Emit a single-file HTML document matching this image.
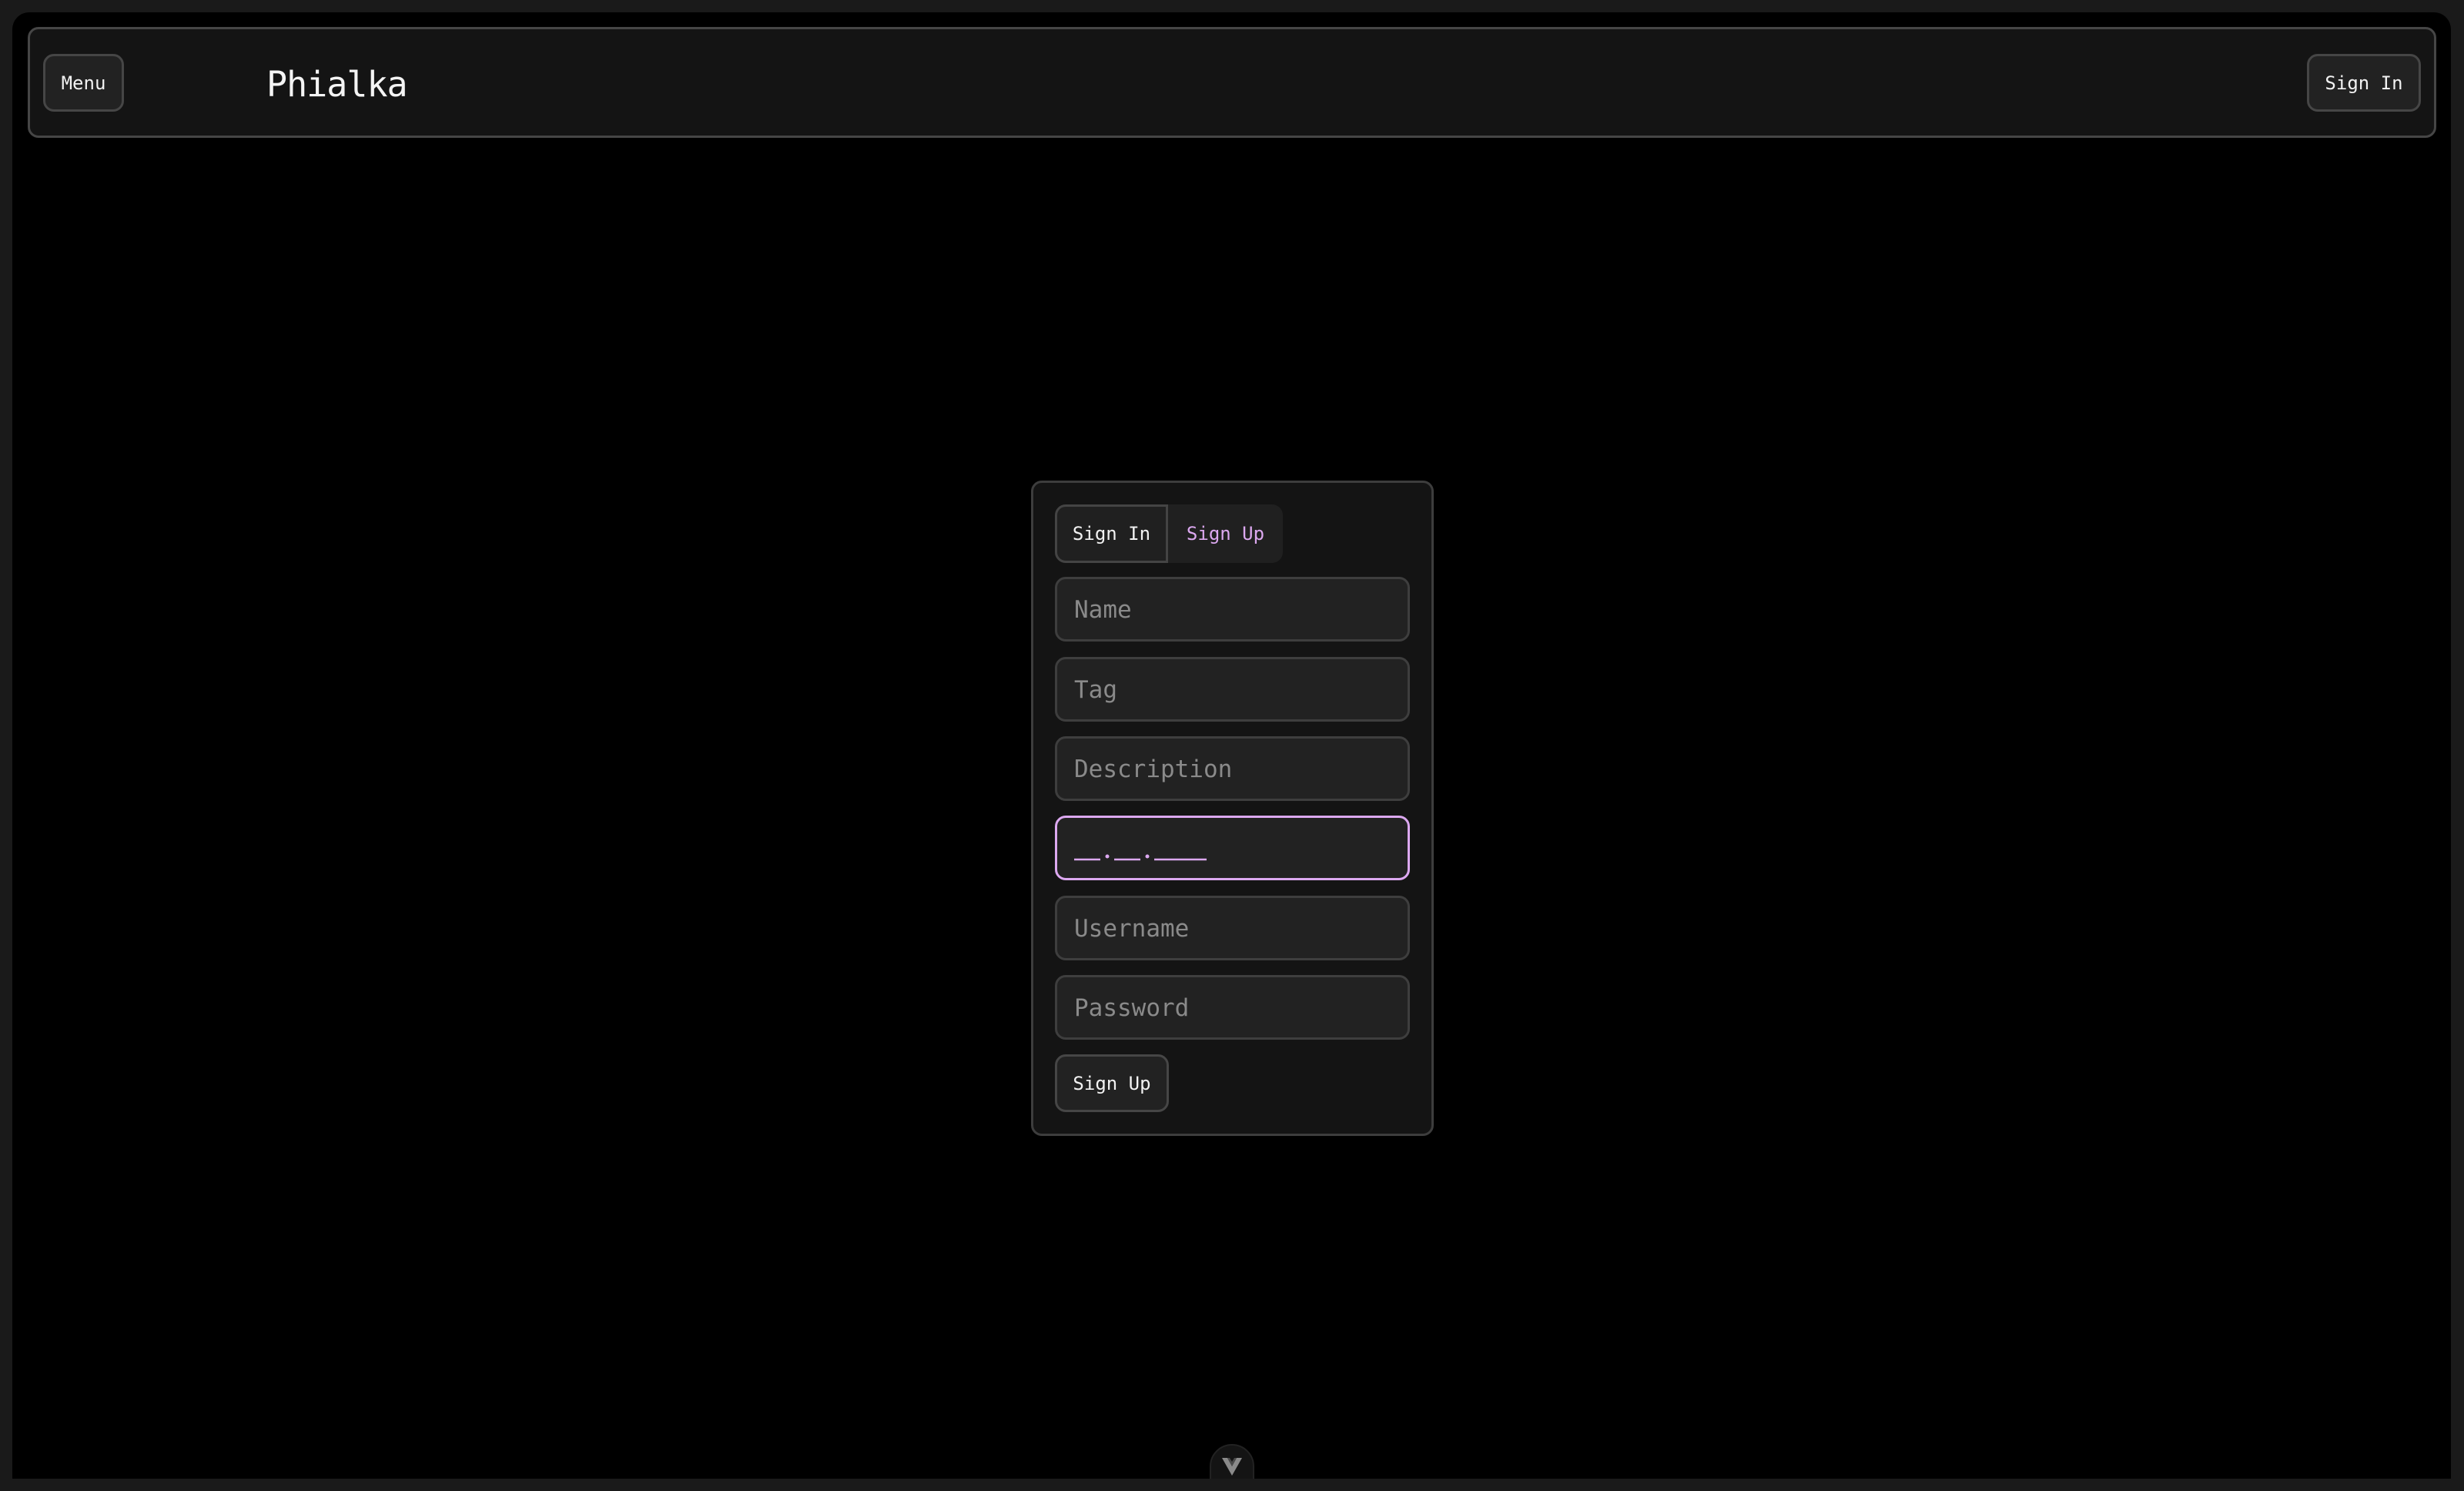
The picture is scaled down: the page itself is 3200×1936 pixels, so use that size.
<!DOCTYPE html>
<html><head><meta charset="utf-8"><style>
*{box-sizing:border-box;margin:0;padding:0}
html,body{width:3200px;height:1936px;background:#1a1a1a;overflow:hidden;font-family:"DejaVu Sans Mono","Liberation Mono",monospace}
.main{position:absolute;left:16px;top:16px;width:3167px;height:1904px;background:#000;border-radius:22px 22px 0 0}
.hdr{position:absolute;left:36px;top:35px;width:3128px;height:144px;background:#141414;border:3px solid #464646;border-radius:14px}
.btn{position:absolute;background:#222;border:3px solid #464646;border-radius:14px;color:#f2f2f2;font-size:24px;display:flex;align-items:center;justify-content:center}
.title{position:absolute;left:346px;top:80px;font-size:45px;color:#f4f4f4;line-height:60px;letter-spacing:-1px}
.card{position:absolute;left:1339px;top:624px;width:523px;height:851px;background:#141414;border:3px solid #3d3d3d;border-radius:14px}
.tabs{position:absolute;left:1370px;top:655px;width:296px;height:76px;background:#202020;border-radius:14px}
.tab1{position:absolute;left:0;top:0;width:147px;height:76px;border:3px solid #444;border-radius:14px 0 0 14px;color:#f2f2f2;font-size:24px;display:flex;align-items:center;justify-content:center}
.tab2{position:absolute;left:147px;top:0;width:149px;height:76px;color:#dca8f0;font-size:24px;display:flex;align-items:center;justify-content:center}
.in{position:absolute;left:1370px;width:461px;height:84px;background:#222;border:3px solid #3e3e3e;border-radius:14px;color:#8a8a8a;font-size:31px;padding-left:22px;padding-top:2px;display:flex;align-items:center}
.foc{border-color:#dca8f0;color:#dca8f0}
</style></head><body>
<div class="main"></div>
<div class="hdr"></div>
<div class="btn" style="left:56px;top:70px;width:105px;height:75px">Menu</div>
<div class="title">Phialka</div>
<div class="btn" style="left:2996px;top:70px;width:148px;height:75px">Sign In</div>
<div class="card"></div>
<div class="tabs"><div class="tab1">Sign In</div><div class="tab2">Sign Up</div></div>
<div class="in" style="top:749px">Name</div>
<div class="in" style="top:853px">Tag</div>
<div class="in" style="top:956px">Description</div>
<div class="in foc" style="top:1059px"><svg width="200" height="30" style="margin-top:14px"><g stroke="#dca8f0" stroke-width="2.5"><line x1="0" y1="22" x2="34" y2="22"/><line x1="52" y1="22" x2="86" y2="22"/><line x1="104" y1="22" x2="172" y2="22"/></g><circle cx="43" cy="18" r="2.5" fill="#dca8f0"/><circle cx="95" cy="18" r="2.5" fill="#dca8f0"/></svg></div>
<div class="in" style="top:1163px">Username</div>
<div class="in" style="top:1266px">Password</div>
<div class="btn" style="left:1370px;top:1369px;width:148px;height:75px">Sign Up</div>
<div style="position:absolute;left:1571px;top:1875px;width:58px;height:60px;background:#141414;border:2px solid #222;border-radius:29px 29px 0 0"></div>
<div style="position:absolute;left:0;top:1920px;width:3200px;height:16px;background:#1a1a1a"></div>
<svg style="position:absolute;left:1585px;top:1892px" width="30" height="26"><polygon points="2,1 15,24 28,1 21,1 15,12 9,1" fill="#8a8a8a"/><polygon points="9,1 15,12 21,1 18,1 15,6 12,1" fill="#4a4a4a"/></svg>
</body></html>
